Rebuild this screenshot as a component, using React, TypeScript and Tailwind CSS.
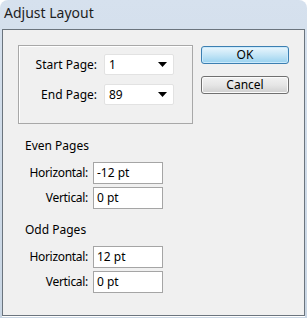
import React from "react";

// ---------------- small pieces ----------------
const Select = ({ value }: { value: string }) => (
  <div className="flex h-[21px] w-[70px] items-center justify-between rounded-[2px] border border-[#e2e2e2] bg-white pl-[4px] pr-[6px]">
    <span>{value}</span>
    <svg width="9" height="5" viewBox="0 0 9 5">
      <path d="M0 0 H9 L4.5 5 Z" fill="#000" />
    </svg>
  </div>
);

const Field = ({ label, value }: { label: string; value: string }) => (
  <div className="flex items-center">
    <span className="w-[68px] pr-[5px] text-right tracking-[-0.3px]">{label}</span>
    <div className="flex h-[22px] w-[70px] items-center border border-[#a5a5a5] bg-white pl-[3px]">
      {value}
    </div>
  </div>
);

const Offsets = ({ title, h, v }: { title: string; h: string; v: string }) => (
  <div className="flex flex-col">
    <div className="pl-[22px] leading-[16px]">{title}</div>
    <div className="mt-[8px] flex flex-col gap-[3px] pl-[22px]">
      <Field label="Horizontal:" value={h} />
      <Field label="Vertical:" value={v} />
    </div>
  </div>
);

// ---------------- component ----------------
export default function App() {
  return (
    <div
      className="h-[318px] w-[307px] overflow-hidden bg-white text-[12px] text-black"
      style={{ fontFamily: '"Noto Sans", "Open Sans", sans-serif' }}
    >
      <div className="flex h-[318px] w-[307px] flex-col rounded-t-[8px] bg-gradient-to-b from-[#d6e1ee] via-[#cfdbe8] to-[#c9d6e4] px-[2px] pb-[2px]">
        {/* title */}
        <div className="h-[29px] pl-[2px] pt-[2px] text-[14px] leading-[22px] text-[#1e1e1e]">
          Adjust Layout
        </div>

        {/* client area */}
        <div className="flex-1 border border-[#6b747d] bg-[#f0f0f0] shadow-[0_1px_0_#ffffff]">
          <div className="flex gap-[8px] pl-[15px] pt-[15px]">
            {/* page range */}
            <div className="h-[79px] w-[175px] border border-[#a8a8a8] shadow-[inset_1px_1px_0_#ffffff]">
              <div className="flex flex-col gap-[9px] pt-[8px]">
                <div className="flex items-center">
                  <span className="w-[85px] pr-[7px] text-right">Start Page:</span>
                  <Select value="1" />
                </div>
                <div className="flex items-center">
                  <span className="w-[85px] pr-[7px] text-right">End Page:</span>
                  <Select value="89" />
                </div>
              </div>
            </div>

            {/* buttons */}
            <div className="flex flex-col gap-[12px] pt-[1px]">
              <button className="h-[18px] w-[88px] rounded-[3px] border border-[#3c7fb1] bg-gradient-to-b from-[#eaf6fd] via-[#c4e5f6] to-[#98d1ef] text-[12px] leading-[14px] shadow-[inset_0_0_0_1px_#cbeafc]">
                OK
              </button>
              <button className="h-[18px] w-[88px] rounded-[3px] border border-[#707070] bg-gradient-to-b from-[#f2f2f2] via-[#e6e6e6] to-[#cfcfcf] text-[12px] leading-[14px] shadow-[inset_0_0_0_1px_#fbfbfb]">
                Cancel
              </button>
            </div>
          </div>

          <div className="mt-[14px] flex flex-col gap-[13px]">
            <Offsets title="Even Pages" h="-12 pt" v="0 pt" />
            <Offsets title="Odd Pages" h="12 pt" v="0 pt" />
          </div>
        </div>
      </div>
    </div>
  );
}
